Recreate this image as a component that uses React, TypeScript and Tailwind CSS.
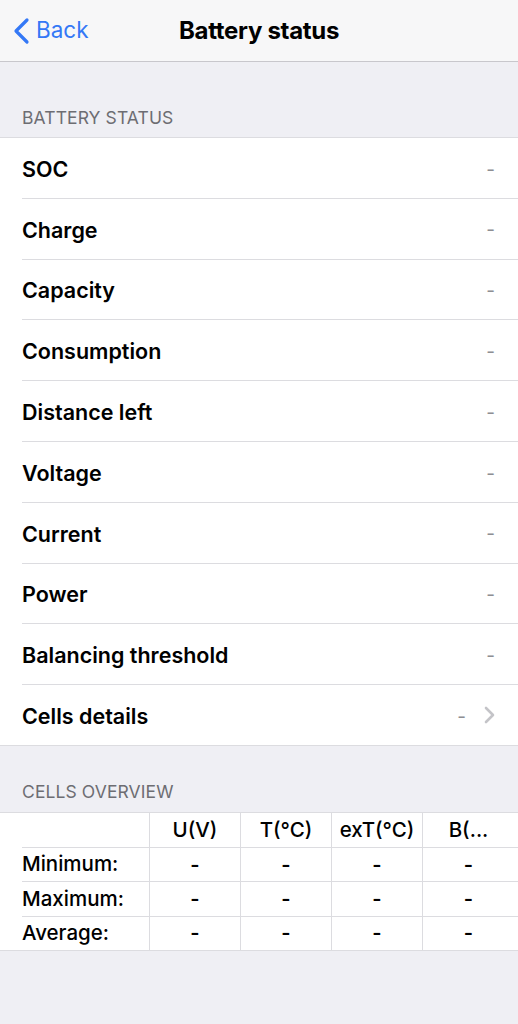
import React from "react";

const rows = [
  "SOC",
  "Charge",
  "Capacity",
  "Consumption",
  "Distance left",
  "Voltage",
  "Current",
  "Power",
  "Balancing threshold",
];

const cols = ["U(V)", "T(°C)", "exT(°C)", "B(..."];
const tRows = ["Minimum:", "Maximum:", "Average:"];

export default function App() {
  return (
    <div
      className="w-[518px] h-[1024px] bg-[#efeff4] overflow-hidden text-black"
      style={{ fontFamily: "Inter, 'Noto Sans', sans-serif" }}
    >
      {/* Nav bar */}
      <div className="relative h-[62px] bg-[#f7f7f8] border-b border-[#c8c7cc] flex items-center justify-center">
        <div className="absolute left-[12px] top-0 h-full flex items-center gap-[5px] text-[#3478f6]">
          <svg width="19" height="28" viewBox="0 0 19 28" fill="none">
            <path d="M15 3 L4 14 L15 25" stroke="#3478f6" strokeWidth="3.2" strokeLinecap="round" strokeLinejoin="round" />
          </svg>
          <span className="text-[22.5px] leading-none">Back</span>
        </div>
        <span className="text-[24px] font-bold tracking-[-0.3px]">Battery status</span>
      </div>

      {/* Section header */}
      <div className="h-[75px] flex items-end pl-[22px] pb-[6px] text-[17.5px] text-[#6d6d72] tracking-[0.1px]">
        BATTERY STATUS
      </div>

      <div className="bg-white border-t border-b border-[#dcdce0]">
        {rows.map((r) => (
          <div key={r} className="pl-[22px]">
            <div className="h-[60.8px] border-b border-[#dcdce0] flex items-center justify-between pr-[23px]">
              <span className="text-[21.5px] font-semibold pt-[2px]">{r}</span>
              <span className="text-[19px] text-[#8e8e93] pt-[4px]">-</span>
            </div>
          </div>
        ))}
        <div className="pl-[22px]">
          <div className="h-[59.8px] flex items-center justify-between pr-[23px]">
            <span className="text-[21.5px] font-semibold pt-[2px]">Cells details</span>
            <div className="flex items-center gap-[18px]">
              <span className="text-[19px] text-[#8e8e93] pt-[4px]">-</span>
              <svg width="11" height="18" viewBox="0 0 11 18" fill="none">
                <path d="M2 2 L9 9 L2 16" stroke="#c4c4c8" strokeWidth="2.6" strokeLinecap="round" strokeLinejoin="round" />
              </svg>
            </div>
          </div>
        </div>
      </div>

      <div className="h-[66px] flex items-end pl-[22px] pb-[7px] text-[17.5px] text-[#6d6d72] tracking-[0.1px]">
        CELLS OVERVIEW
      </div>

      <div className="bg-white border-t border-b border-[#dcdce0]">
        <div className="flex h-[34px]">
          <div className="w-[150px] border-r border-[#dcdce0]" />
          {cols.map((c, i) => (
            <div
              key={c}
              className={
                i < 3
                  ? "w-[91px] border-r border-[#dcdce0] flex items-center justify-center text-[20.5px] font-medium"
                  : "w-[91px] flex items-center justify-center text-[20.5px] font-medium"
              }
            >
              {c}
            </div>
          ))}
        </div>
        {tRows.map((r) => (
          <div key={r} className="pl-[22px]">
            <div className="flex h-[34.3px] border-t border-[#dcdce0]">
              <div className="w-[128px] border-r border-[#dcdce0] flex items-center text-[20.5px] font-medium">
                {r}
              </div>
              {cols.map((c, i) => (
                <div
                  key={c}
                  className={
                    i < 3
                      ? "w-[91px] border-r border-[#dcdce0] flex items-center justify-center text-[20px] font-semibold"
                      : "w-[91px] flex items-center justify-center text-[20px] font-semibold"
                  }
                >
                  -
                </div>
              ))}
            </div>
          </div>
        ))}
      </div>
    </div>
  );
}
